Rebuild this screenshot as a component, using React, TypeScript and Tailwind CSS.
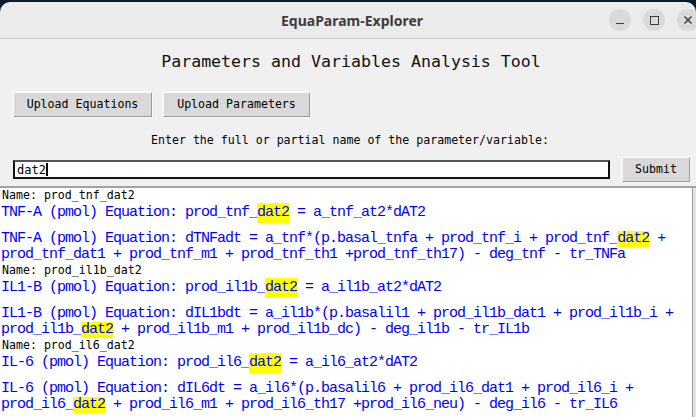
import React from 'react';

type Seg = string | { hl: string };

interface Block {
  name: string;
  eq: Seg[];
  ode: Seg[][];
}

const blocks: Block[] = [
  {
    name: 'prod_tnf_dat2',
    eq: ['TNF-A (pmol) Equation: prod_tnf_', { hl: 'dat2' }, ' = a_tnf_at2*dAT2'],
    ode: [
      ['TNF-A (pmol) Equation: dTNFadt = a_tnf*(p.basal_tnfa + prod_tnf_i + prod_tnf_', { hl: 'dat2' }, ' +'],
      ['prod_tnf_dat1 + prod_tnf_m1 + prod_tnf_th1 +prod_tnf_th17) - deg_tnf - tr_TNFa'],
    ],
  },
  {
    name: 'prod_il1b_dat2',
    eq: ['IL1-B (pmol) Equation: prod_il1b_', { hl: 'dat2' }, ' = a_il1b_at2*dAT2'],
    ode: [
      ['IL1-B (pmol) Equation: dIL1bdt = a_il1b*(p.basalil1 + prod_il1b_dat1 + prod_il1b_i +'],
      ['prod_il1b_', { hl: 'dat2' }, ' + prod_il1b_m1 + prod_il1b_dc) - deg_il1b - tr_IL1b'],
    ],
  },
  {
    name: 'prod_il6_dat2',
    eq: ['IL-6 (pmol) Equation: prod_il6_', { hl: 'dat2' }, ' = a_il6_at2*dAT2'],
    ode: [
      ['IL-6 (pmol) Equation: dIL6dt = a_il6*(p.basalil6 + prod_il6_dat1 + prod_il6_i +'],
      ['prod_il6_', { hl: 'dat2' }, ' + prod_il6_m1 + prod_il6_th17 +prod_il6_neu) - deg_il6 - tr_IL6'],
    ],
  },
];

const small = 'font-[DejaVu_Sans_Mono,monospace] text-[11.6px] text-black';

const Line = ({ segs, h }: { segs: Seg[]; h: string }) => (
  <div className={`${h} whitespace-pre text-[#0000ff] font-mono text-[15px] tracking-[-1px]`}>
    {segs.map((s, i) =>
      typeof s === 'string' ? (
        <span key={i}>{s}</span>
      ) : (
        <span key={i} className="inline-block bg-[#ffff00] align-top">
          {s.hl}
        </span>
      )
    )}
  </div>
);

const TkButton = ({ label, w }: { label: string; w: string }) => (
  <button
    className={`${w} h-[25px] bg-[#d9d9d9] border border-t-[#fbfbfb] border-l-[#fbfbfb] border-b-[#9a9a9a] border-r-[#9a9a9a] outline outline-1 outline-[#f6f6f6] ${small} flex items-center justify-center`}
  >
    {label}
  </button>
);

export default function App() {
  return (
    <div className="w-[696px] h-[417px] overflow-hidden bg-[#0b1a2c] pt-[2px] flex flex-col">
      {/* title bar */}
      <div className="h-[37px] shrink-0 rounded-t-[10px] bg-[#ebebeb] border-b border-[#cdcdcd] flex items-center">
        <span className="ml-[281px] font-[Noto_Sans,sans-serif] font-bold text-[14px] text-[#3d3d3d]">
          EquaParam-Explorer
        </span>
        <div className="ml-auto -mr-[3px] flex items-center gap-[12px]">
          <div className="w-[22px] h-[22px] rounded-full bg-[#dadada] flex items-center justify-center">
            <div className="w-[8px] h-[1.5px] bg-[#3d3d3d] mt-[7px]" />
          </div>
          <div className="w-[22px] h-[22px] rounded-full bg-[#dadada] flex items-center justify-center">
            <div className="w-[9px] h-[9px] border-[1.5px] border-[#3d3d3d]" />
          </div>
          <div className="w-[22px] h-[22px] rounded-full bg-[#dadada] flex items-center justify-center">
            <svg width="10" height="10" viewBox="0 0 10 10">
              <path d="M1.5 1.5 L8.5 8.5 M8.5 1.5 L1.5 8.5" stroke="#3d3d3d" strokeWidth="1.5" />
            </svg>
          </div>
        </div>
      </div>

      {/* main */}
      <div className="flex-1 bg-[#f0f0f0] flex flex-col">
        <div className="mt-[13px] h-[20px] leading-[20px] text-center pl-[6px] font-[DejaVu_Sans_Mono,monospace] text-[16.6px] text-[#111]">
          Parameters and Variables Analysis Tool
        </div>

        <div className="mt-[20px] ml-[13px] flex gap-[11px]">
          <TkButton label="Upload Equations" w="w-[139px]" />
          <TkButton label="Upload Parameters" w="w-[147px]" />
        </div>

        <div className={`mt-[15px] h-[16px] leading-[16px] pl-[151px] ${small}`}>
          Enter the full or partial name of the parameter/variable:
        </div>

        <div className="mt-[9px] flex items-center">
          <div className="ml-[13px] w-[597px] h-[19px] bg-white border-2 border-[#111] border-t-[#555] flex items-center pl-[2px]">
            <span className={`${small} text-[12px]`}>dat2</span>
            <span className="w-[2px] h-[13px] bg-black" />
          </div>
          <div className="ml-[12px]">
            <TkButton label="Submit" w="w-[68px]" />
          </div>
        </div>

        {/* results */}
        <div className="mt-[4px] flex-1 flex border-t-2 border-[#a3a3a3] bg-white">
          <div className="flex-1 pl-[1px]">
            {blocks.map((b) => (
              <div key={b.name} className="flex flex-col">
                <div className={`h-[15px] leading-[15px] pl-[1px] ${small}`}>Name: {b.name}</div>
                <Line segs={b.eq} h="h-[20px] leading-[20px]" />
                <div className="h-[8px]" />
                {b.ode.map((l, i) => (
                  <Line key={i} segs={l} h="h-[16px] leading-[16px]" />
                ))}
              </div>
            ))}
          </div>
          <div className="w-[4px] border-l border-[#9a9a9a] bg-[#e4e4e4]" />
        </div>
      </div>
    </div>
  );
}
